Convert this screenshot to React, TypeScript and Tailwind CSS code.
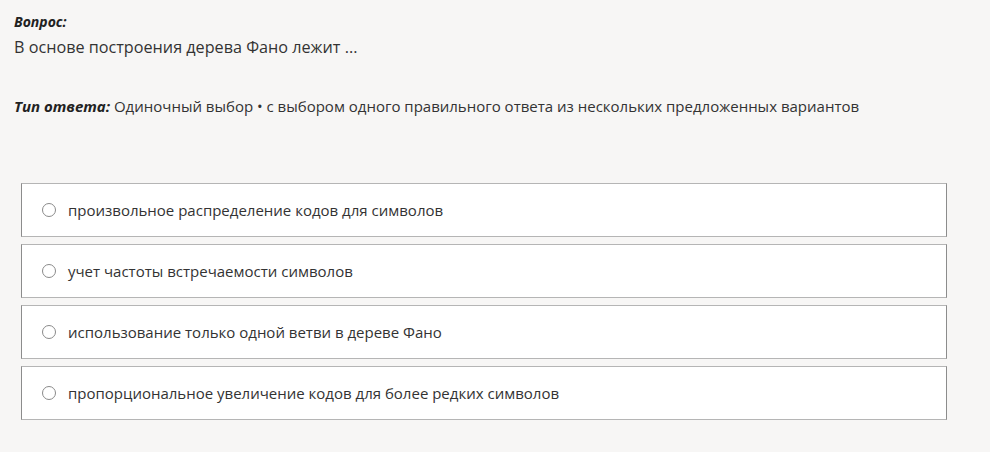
const OPTIONS = [
  'произвольное распределение кодов для символов',
  'учет частоты встречаемости символов',
  'использование только одной ветви в дереве Фано',
  'пропорциональное увеличение кодов для более редких символов',
]

export default function App() {
  return (
    <div className="min-h-[452px] w-[990px] bg-[#f7f6f5] text-[#333] font-['Open_Sans',sans-serif]">
      <div className="pl-[14px] pt-[12px]">
        <div className="text-[14px] font-bold italic text-[#222] leading-[20px]">Вопрос:</div>
        <div className="text-[16.2px] leading-[22px] mt-[4px]">В основе построения дерева Фано лежит ...</div>
        <div className="mt-[37px] text-[15px] leading-[22px]">
          <span className="font-bold italic text-[#222]">Тип ответа:</span> Одиночный выбор • с выбором одного правильного ответа из нескольких предложенных вариантов
        </div>
      </div>

      <div className="mt-[66px] ml-[21px] w-[926px] flex flex-col gap-[7px]">
        {OPTIONS.map(o => (
          <label
            key={o}
            className="h-[54px] flex items-center bg-white border border-[#b5b5b5] border-l-[#8c8c8c] border-r-[#8c8c8c] pl-[20px]"
          >
            <span className="w-[14px] h-[14px] rounded-full border border-[#8a8a8a] bg-white flex-shrink-0" />
            <span className="ml-[12px] text-[15px] text-[#333]">{o}</span>
          </label>
        ))}
      </div>
    </div>
  )
}
